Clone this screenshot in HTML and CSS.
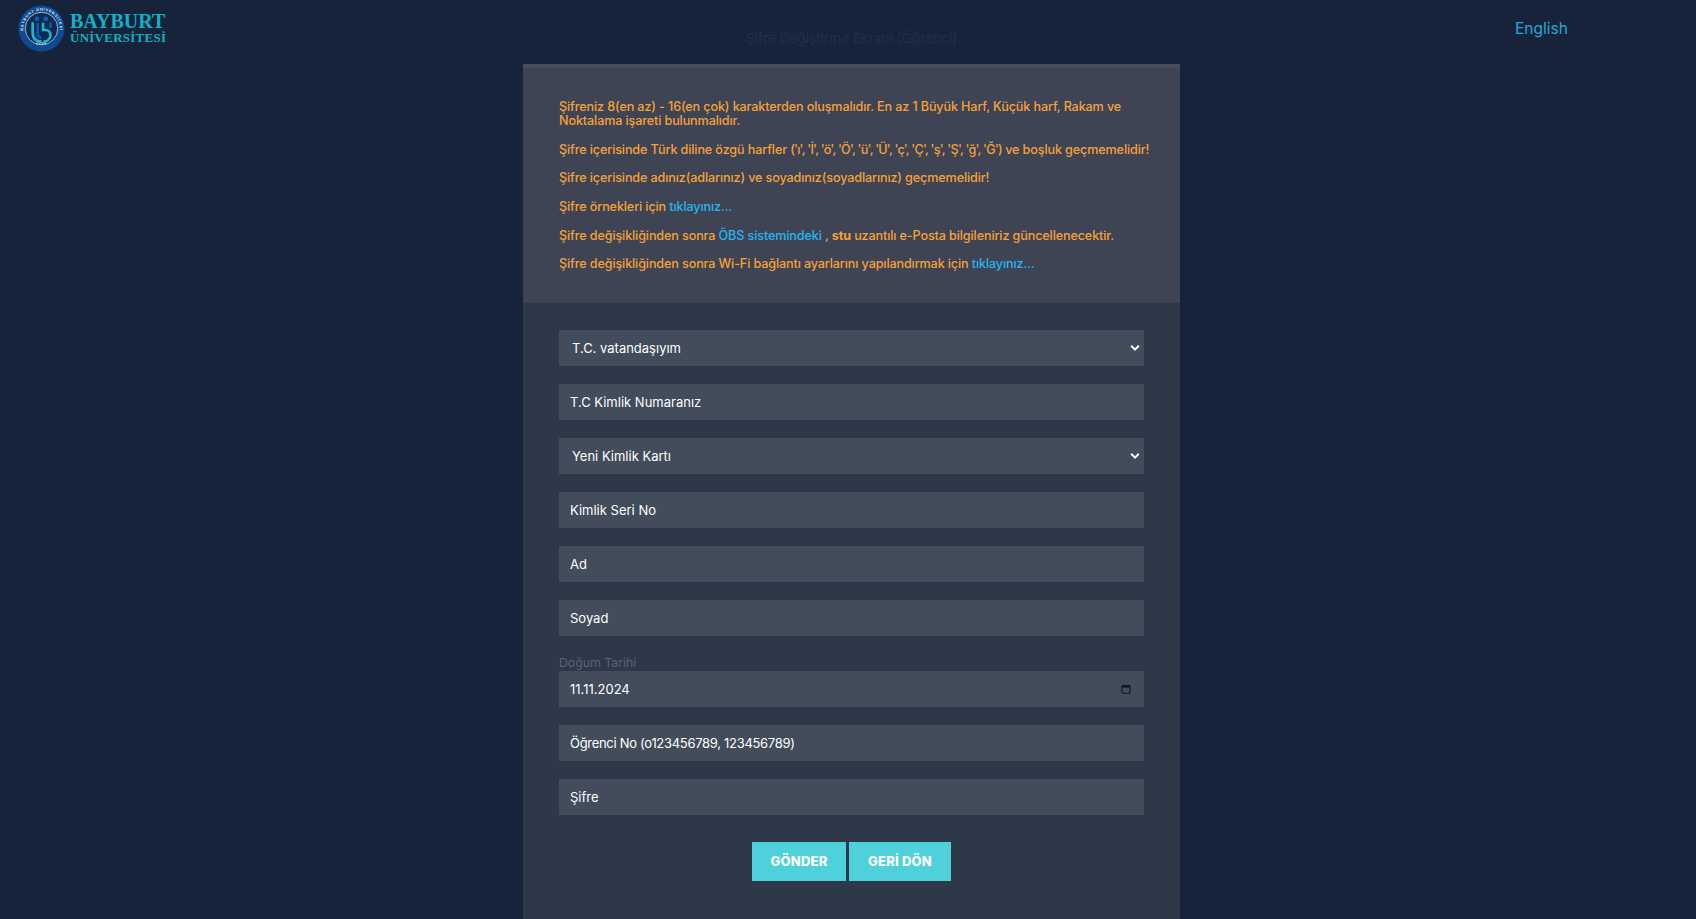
FILE: index.html
```html
<!DOCTYPE html>
<html lang="tr">
<head>
<meta charset="utf-8">
<title>Şifre Değiştirme Ekranı (Öğrenci)</title>
<link rel="stylesheet" href="styles.css">
</head>
<body>
<header class="topbar">
  <a class="brand" href="#">
    <svg class="brand-mark" viewBox="0 0 48 48" width="47" height="47" aria-hidden="true">
      <defs>
        <path id="ring-top" d="M5.6 27A18.6 18.6 0 1 1 42.4 27"/>
        <path id="ring-bottom" d="M8.5 33A19.6 19.6 0 0 0 39.5 33"/>
      </defs>
      <circle cx="24" cy="24" r="23.5" fill="#0c4a94"/>
      <circle cx="24" cy="24" r="16.6" fill="#10294f" stroke="#e3eef6" stroke-width=".7"/>
      <text class="ring-text"><textPath href="#ring-top" startOffset="50%" text-anchor="middle">BAYBURT ÜNİVERSİTESİ</textPath></text>
      <text class="ring-text"><textPath href="#ring-bottom" startOffset="50%" text-anchor="middle">2008</textPath></text>
      <circle cx="19.3" cy="14.2" r="2.5" fill="#0c5fb0"/>
      <circle cx="28.3" cy="14.2" r="2.5" fill="#0c5fb0"/>
      <path d="M15 17.5v11.2c0 6 4 8.8 9 8.8" fill="none" stroke="#1cb6cf" stroke-width="2.8"/>
      <path d="M20.2 18.5v10.6c0 3 1.6 4.2 3.8 4.2" fill="none" stroke="#0c5fb0" stroke-width="2.6"/>
      <path d="M25.6 18v7.5h2.2c3.4 0 5.4 2.2 5.4 5.2s-2.2 6.6-7.4 6.8" fill="none" stroke="#1cb6cf" stroke-width="2.6"/>
      <path d="M33.2 17.5v6" fill="none" stroke="#0c5fb0" stroke-width="2.4"/>
    </svg>
    <span class="brand-name">
      <span class="brand-line-1">BAYBURT</span>
      <span class="brand-line-2">ÜNİVERSİTESİ</span>
    </span>
  </a>
  <h1 class="page-title">Şifre Değiştirme Ekranı (Öğrenci)</h1>
  <a class="lang" href="#">English</a>
</header>

<main class="card">
  <section class="rules">
    <p>Şifreniz 8(en az) - 16(en çok) karakterden oluşmalıdır. En az 1 Büyük Harf, Küçük harf, Rakam ve Noktalama işareti bulunmalıdır.</p>
    <p>Şifre içerisinde Türk diline özgü harfler <span class="quoted">('ı', 'İ', 'ö', 'Ö', 'ü', 'Ü', 'ç', 'Ç', 'ş', 'Ş', 'ğ', 'Ğ')</span> ve boşluk geçmemelidir!</p>
    <p>Şifre içerisinde adınız(adlarınız) ve soyadınız(soyadlarınız) geçmemelidir!</p>
    <p>Şifre örnekleri için <a href="#">tıklayınız...</a></p>
    <p>Şifre değişikliğinden sonra <a href="#">ÖBS sistemindeki</a> , <strong>stu</strong> uzantılı e-Posta bilgileniriz güncellenecektir.</p>
    <p>Şifre değişikliğinden sonra Wi-Fi bağlantı ayarlarını yapılandırmak için <a href="#">tıklayınız...</a></p>
  </section>

  <form class="form">
    <div class="select-wrap">
      <select class="field select"><option>T.C. vatandaşıyım</option></select>
      <svg class="chevron" viewBox="0 0 10 8" width="10" height="8" aria-hidden="true"><path d="M1.2 1.8 5 5.6l3.8-3.8" fill="none" stroke="#fff" stroke-width="2"/></svg>
    </div>
    <input class="field" type="text" placeholder="T.C Kimlik Numaranız">
    <div class="select-wrap">
      <select class="field select"><option>Yeni Kimlik Kartı</option></select>
      <svg class="chevron" viewBox="0 0 10 8" width="10" height="8" aria-hidden="true"><path d="M1.2 1.8 5 5.6l3.8-3.8" fill="none" stroke="#fff" stroke-width="2"/></svg>
    </div>
    <input class="field" type="text" placeholder="Kimlik Seri No">
    <input class="field" type="text" placeholder="Ad">
    <input class="field" type="text" placeholder="Soyad">
    <div class="date-group">
      <label class="date-label" for="dob">Doğum Tarihi</label>
      <div class="date-wrap">
        <input id="dob" class="field date" type="text" value="11.11.2024">
        <svg class="calendar" viewBox="0 0 10 10" width="10" height="10" aria-hidden="true">
          <rect x="1" y="1.6" width="8" height="7.6" rx=".8" fill="none" stroke="#14171d" stroke-width="1.1"/>
          <rect x="1" y="1.2" width="8" height="2.4" fill="#14171d"/>
        </svg>
      </div>
    </div>
    <input class="field field-digits" type="text" placeholder="Öğrenci No (o123456789, 123456789)">
    <input class="field" type="password" placeholder="Şifre">
    <div class="actions">
      <button class="btn btn-send" type="button">GÖNDER</button>
      <button class="btn btn-back" type="button">GERİ DÖN</button>
    </div>
  </form>
</main>
</body>
</html>
```
FILE: styles.css
```css
* { box-sizing: border-box; }

html, body { height: 100%; }

body {
  margin: 0;
  background: #17233b;
  font-family: Inter, "Open Sans", "Liberation Sans", sans-serif;
  overflow: hidden;
}

a { text-decoration: none; }

.topbar {
  height: 64px;
  display: grid;
  grid-template-columns: 523px 657px 1fr;
  align-items: start;
}

.brand {
  display: flex;
  align-items: flex-start;
  padding: 5px 0 0 18px;
}

.brand-mark { flex: none; }

.brand-name {
  display: flex;
  flex-direction: column;
  margin: 7px 0 0 5px;
  font-family: "Liberation Serif", serif;
  font-weight: 700;
  color: #10b1c4;
}

.brand-line-1 {
  font-size: 20px;
  line-height: 19px;
}

.brand-line-2 {
  font-size: 13px;
  line-height: 13px;
  letter-spacing: .25px;
}

.ring-text {
  font-family: "Liberation Sans", sans-serif;
  font-size: 3.9px;
  font-weight: 700;
  letter-spacing: .75px;
  fill: #e3eef6;
}

.page-title {
  margin: 30px 0 0;
  font-size: 13.6px;
  line-height: 16px;
  font-weight: 400;
  text-align: center;
  color: #222f47;
}

.lang {
  justify-self: start;
  margin: 19px 0 0 335px;
  font-size: 15.5px;
  line-height: 19px;
  color: #2aa5d6;
}

.card {
  width: 657px;
  margin-left: 523px;
  background: #2d3849;
}

.rules {
  padding: 32px 20px 17px 36px;
  border-top: 4px solid #474d5e;
  background: #3e4453;
  font-size: 12.6px;
  font-weight: 500;
  line-height: 14.3px;
  letter-spacing: -.12px;
  color: #f5a13a;
}

.rules p { margin: 0 0 14.3px; }

.rules a { color: #28b4f2; }

.rules strong { font-weight: 700; }

.quoted { letter-spacing: -.77px; }

.form {
  display: flex;
  flex-direction: column;
  gap: 18px;
  padding: 27px 36px 39px;
}

.field {
  display: block;
  width: 100%;
  height: 36px;
  padding: 0 11px;
  border: 0;
  border-radius: 0;
  outline: 0;
  background: #424c5b;
  color: #fff;
  font-family: inherit;
  font-size: 13px;
  font-weight: 400;
}

.field::placeholder {
  color: #fff;
  opacity: 1;
}

.field-digits { letter-spacing: -.3px; }

.select-wrap,
.date-wrap { position: relative; }

.select {
  padding-left: 13px;
  appearance: none;
}

.chevron {
  position: absolute;
  top: 14px;
  right: 4px;
}

.calendar {
  position: absolute;
  top: 13px;
  right: 13px;
}

.date-label {
  display: block;
  height: 17px;
  font-size: 12.3px;
  line-height: 17px;
  color: #5a6473;
}

.actions {
  display: flex;
  justify-content: center;
  gap: 3px;
  margin-top: 9px;
}

.btn {
  height: 39px;
  padding: 0;
  border: 0;
  background: #4fd1db;
  color: #fff;
  font-family: inherit;
  font-size: 13px;
  font-weight: 800;
  letter-spacing: .2px;
}

.btn-send { width: 94px; }

.btn-back { width: 102px; }
```
